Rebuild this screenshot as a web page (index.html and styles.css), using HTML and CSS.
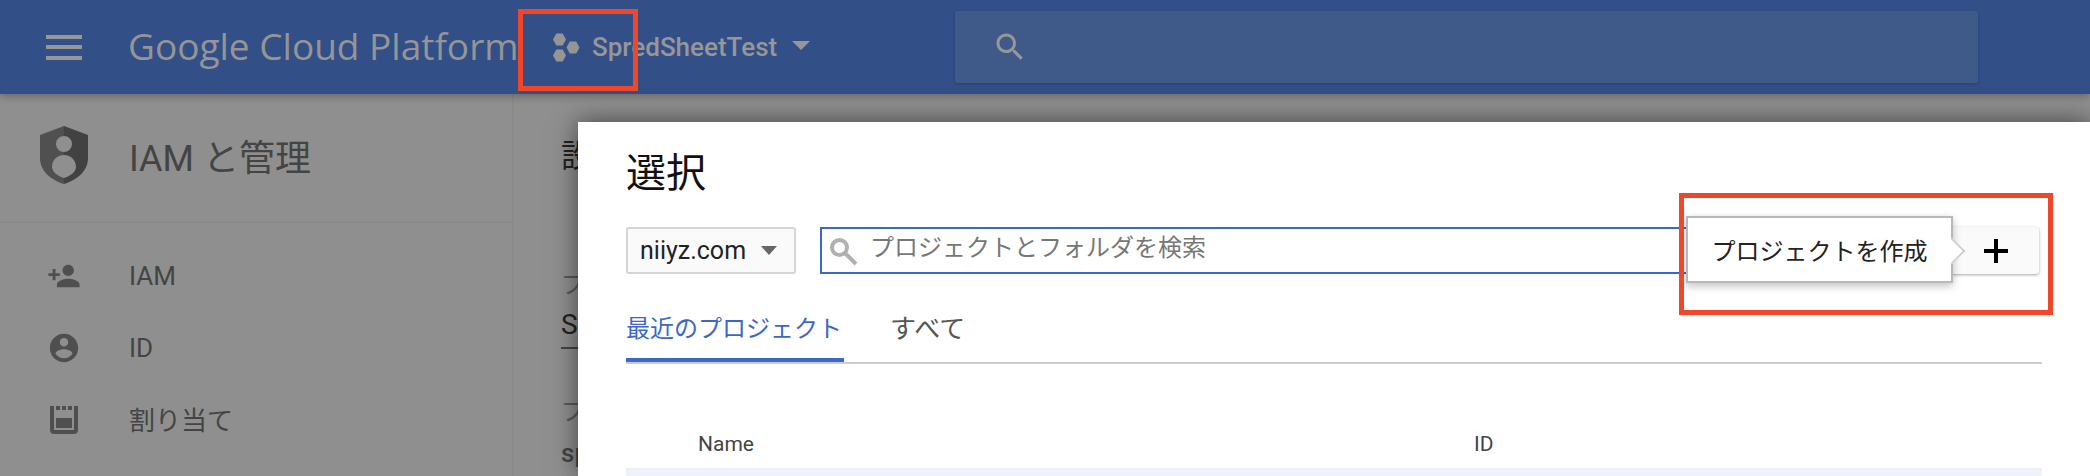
FILE: index.html
```html
<!DOCTYPE html>
<html lang="ja">
<head>
    <meta charset="UTF-8">
    <title>IAM と管理 - Google Cloud Platform</title>
    <link rel="stylesheet" href="styles.css">
</head>
<body>
<header class="topbar">
    <div class="menu-icon"><span></span><span></span><span></span></div>
    <div class="brand">Google Cloud Platform</div>
    <div class="project">
        <svg class="project-icon" viewBox="0 0 27 29">
            <polygon points="0,6.500 3.300,0.500 9.700,0.500 13,6.500 9.700,12.500 3.300,12.500"/>
            <polygon points="13.500,14.500 16.800,8.500 23.200,8.500 26.500,14.500 23.200,20.500 16.800,20.500"/>
            <polygon points="0,22.500 3.300,16.500 9.700,16.500 13,22.500 9.700,28.500 3.300,28.500"/>
        </svg>
        <span class="project-name">SpredSheetTest</span>
        <span class="caret caret-top"></span>
    </div>
    <div class="top-search">
        <svg class="top-search-icon" viewBox="0 0 24 24"><path d="M15.5 14h-.79l-.28-.27C15.41 12.59 16 11.11 16 9.5 16 5.91 13.09 3 9.500 3S3 5.910 3 9.500 5.910 16 9.500 16c1.610 0 3.090-.59 4.230-1.570l.27.28v.79l5 4.990L20.490 19l-4.990-5zm-6 0C7.010 14 5 11.990 5 9.500S7.010 5 9.500 5 14 7.010 14 9.500 11.990 14 9.500 14z"/></svg>
    </div>
</header>

<div class="main">
    <aside class="sidebar">
        <div class="side-head">
            <svg class="shield" viewBox="0 0 48 58">
                <path class="shield-left" fill-rule="evenodd" d="M24 0L0 9V32C0 45 11 54 24 58V52C18 50 12 46 12 41C12 34 17 29 24 29V26a8 8 0 0 1 0-16Z"/>
                <path class="shield-right" fill-rule="evenodd" d="M24 0L48 9V32C48 45 37 54 24 58V52C30 50 36 46 36 41C36 34 31 29 24 29V26a8 8 0 0 0 0-16Z"/>
            </svg>
            <span class="side-title">IAM と管理</span>
        </div>
        <nav class="side-nav">
            <div class="nav-item">
                <svg class="nav-icon" viewBox="0 0 24 24"><path d="M15 12c2.210 0 4-1.790 4-4s-1.790-4-4-4-4 1.790-4 4 1.790 4 4 4zm-9-2V7H4v3H1v2h3v3h2v-3h3v-2H6zm9 4c-2.670 0-8 1.340-8 4v2h16v-2c0-2.660-5.330-4-8-4z"/></svg>
                <span>IAM</span>
            </div>
            <div class="nav-item">
                <svg class="nav-icon" viewBox="0 0 24 24"><path d="M12 2C6.480 2 2 6.480 2 12s4.480 10 10 10 10-4.480 10-10S17.520 2 12 2zm0 3c1.660 0 3 1.340 3 3s-1.340 3-3 3-3-1.340-3-3 1.340-3 3-3zm0 14.200c-2.500 0-4.710-1.280-6-3.220.03-1.990 4-3.080 6-3.080 1.990 0 5.970 1.090 6 3.080-1.290 1.940-3.500 3.220-6 3.220z"/></svg>
                <span>ID</span>
            </div>
            <div class="nav-item">
                <svg class="nav-icon" viewBox="-3 -3 34 34">
                    <path d="M0 0h4V24h20V0h4V24a4 4 0 0 1-4 4H4a4 4 0 0 1-4-4Z"/>
                    <rect x="6" y="0" width="4" height="4"/>
                    <rect x="12" y="0" width="4" height="4"/>
                    <rect x="18" y="0" width="4" height="4"/>
                    <rect x="6" y="12" width="16" height="10"/>
                </svg>
                <span class="nav-label-ja">割り当て</span>
            </div>
        </nav>
    </aside>
    <section class="behind">
        <div class="behind-title">設定</div>
        <div class="behind-label">プロジェクト名</div>
        <div class="behind-value">SpredSheetTest</div>
        <div class="behind-label behind-label-2">プロジェクト ID</div>
        <div class="behind-id">spredsheettest</div>
    </section>
</div>

<div class="dialog">
    <h1 class="dialog-title">選択</h1>
    <div class="toolbar">
        <div class="org-select">
            <span>niiyz.com</span>
            <span class="caret caret-org"></span>
        </div>
        <div class="search-box">
            <svg class="search-icon" viewBox="0 0 28 30">
                <circle cx="9.500" cy="11.500" r="7.500"/>
                <line x1="15" y1="17" x2="26" y2="28"/>
            </svg>
            <span class="search-text">プロジェクトとフォルダを検索</span>
        </div>
        <button class="add-btn">
            <svg class="plus" viewBox="0 0 24 24"><path d="M10 0h4v10h10v4H14v10h-4V14H0v-4h10z"/></svg>
        </button>
    </div>
    <div class="tabs">
        <div class="tab tab-active">最近のプロジェクト</div>
        <div class="tab tab-all">すべて</div>
    </div>
    <div class="table-head">
        <div class="col-name">Name</div>
        <div class="col-id">ID</div>
    </div>
    <div class="table-row"></div>
</div>

<div class="tooltip">プロジェクトを作成</div>
<div class="callout callout-project"></div>
<div class="callout callout-create"></div>
</body>
</html>
```

FILE: styles.css
```css
* {
    margin: 0;
    padding: 0;
    box-sizing: border-box;
}

html, body {
    width: 100%;
    height: 100%;
    overflow: hidden;
}

body {
    font-family: Roboto, "Noto Sans CJK JP", sans-serif;
    background: #8f8f8f;
    color: #444;
    display: flex;
    flex-direction: column;
    position: relative;
}

/* top bar */
.topbar {
    height: 94px;
    flex-shrink: 0;
    background: #324f87;
    display: flex;
    align-items: center;
    padding-left: 46px;
    position: relative;
    box-shadow: 0 2px 8px rgba(0,0,0,0.3);
    z-index: 1;
}

.menu-icon {
    width: 36px;
    height: 25px;
    display: flex;
    flex-direction: column;
    justify-content: space-between;
    margin-right: 46px;
}

.menu-icon span {
    height: 4px;
    background: #979797;
}

.brand {
    width: 425px;
    font-family: "Open Sans", sans-serif;
    font-size: 37px;
    color: #959595;
    white-space: nowrap;
    margin-bottom: 4px;
}

.project {
    width: 402px;
    display: flex;
    align-items: center;
}

.project-icon {
    width: 27px;
    height: 29px;
    fill: #959595;
    margin-right: 12px;
}

.project-name {
    font-size: 26px;
    font-weight: 500;
    color: #979797;
}

.caret {
    width: 0;
    height: 0;
    border-left: 9px solid transparent;
    border-right: 9px solid transparent;
    border-top: 9px solid #979797;
}

.caret-top {
    margin-left: 15px;
    margin-bottom: 3px;
}

.top-search {
    width: 1023px;
    height: 72px;
    background: #3f5988;
    border-radius: 3px;
    box-shadow: 0 1px 3px rgba(0,0,0,0.2);
    display: flex;
    align-items: center;
    padding-left: 37px;
}

.top-search-icon {
    width: 36px;
    height: 36px;
    fill: #979797;
}

/* page behind the dialog */
.main {
    flex: 1;
    min-height: 0;
    display: flex;
    overflow: hidden;
}

.sidebar {
    width: 514px;
    border-right: 2px solid #898989;
}

.side-head {
    height: 129px;
    border-bottom: 2px solid #898989;
    display: flex;
    align-items: center;
    padding: 0 0 6px 40px;
}

.shield {
    width: 48px;
    height: 58px;
    margin-right: 41px;
}

.shield-left {
    fill: #505050;
}

.shield-right {
    fill: #424242;
}

.side-title {
    font-size: 36px;
    color: #444;
}

.side-nav {
    padding-top: 17px;
}

.nav-item {
    height: 72px;
    display: flex;
    align-items: center;
    padding-left: 47px;
    font-size: 26px;
    color: #444;
}

.nav-icon {
    width: 34px;
    height: 34px;
    fill: #4f4f4f;
    margin-right: 48px;
}

.nav-label-ja {
    margin-bottom: 4px;
}

.behind {
    flex: 1;
    padding: 46px 0 0 47px;
    overflow: hidden;
    white-space: nowrap;
}

.behind-title {
    font-size: 32px;
    line-height: 32px;
    color: #222;
    margin-bottom: 95px;
}

.behind-label {
    font-size: 24px;
    color: #5a5a5a;
    line-height: 36px;
}

.behind-value {
    font-size: 28px;
    color: #222;
    width: 200px;
    height: 46px;
    line-height: 44px;
    border-bottom: 2px solid #444;
}

.behind-label-2 {
    margin-top: 45px;
}

.behind-id {
    font-size: 26px;
    font-weight: 500;
    line-height: 30px;
    color: #444;
    margin-top: 8px;
}

/* project picker */
.dialog {
    position: absolute;
    left: 578px;
    top: 122px;
    right: 0;
    bottom: 0;
    background: #fff;
    padding: 0 48px;
    box-shadow: 0 0 24px rgba(0,0,0,0.55);
    overflow: hidden;
    z-index: 2;
}

.dialog-title {
    font-size: 40px;
    font-weight: 400;
    color: #111;
    line-height: 58px;
    padding-top: 23px;
    height: 105px;
}

.toolbar {
    display: flex;
    height: 47px;
}

.org-select {
    width: 170px;
    border: 2px solid #d4d4d4;
    border-radius: 3px;
    background: #fafafa;
    display: flex;
    align-items: center;
    justify-content: space-between;
    padding: 0 17px 0 12px;
    font-size: 25px;
    color: #222;
}

.caret-org {
    border-left-width: 8px;
    border-right-width: 8px;
    border-top: 9px solid #666;
}

.search-box {
    flex: 1;
    margin-left: 24px;
    border: 2px solid #3b67c9;
    display: flex;
    align-items: center;
    padding-left: 8px;
    font-size: 24px;
    color: #777;
}

.search-icon {
    width: 28px;
    height: 30px;
    fill: none;
    stroke: #b0b0b0;
    stroke-width: 4;
    margin-right: 12px;
}

.search-text {
    margin-bottom: 10px;
}

.add-btn {
    width: 89px;
    margin-right: 3px;
    border: none;
    border-radius: 3px;
    background: #fafafa;
    box-shadow: 0 1px 3px rgba(0,0,0,0.35);
    display: flex;
    align-items: center;
    justify-content: flex-end;
    padding-right: 31px;
}

.plus {
    width: 24px;
    height: 24px;
    fill: #000;
}

.tabs {
    display: flex;
    height: 68px;
    margin-top: 22px;
    border-bottom: 2px solid #ccc;
}

.tab {
    font-size: 24px;
    line-height: 32px;
    padding-top: 17px;
    color: #555;
}

.tab-active {
    width: 218px;
    margin-right: 46px;
    color: #3b67c9;
    border-bottom: 4px solid #3b67c9;
    height: 66px;
}

.tab-all {
    font-size: 26px;
}

.table-head {
    display: flex;
    align-items: center;
    height: 106px;
    padding: 56px 0 0 72px;
    border-bottom: 2px solid #eee;
    font-size: 21px;
    color: #444;
}

.col-name {
    width: 776px;
}

.table-row {
    height: 6px;
    background: #eef3fb;
}

/* overlays: tooltip and annotation boxes */
.tooltip {
    position: absolute;
    left: 1686px;
    top: 216px;
    width: 267px;
    height: 67px;
    background: #fff;
    border: 2px solid #b8b8b8;
    box-shadow: 0 3px 8px rgba(0,0,0,0.25);
    font-size: 24px;
    color: #222;
    display: flex;
    align-items: center;
    justify-content: center;
    z-index: 3;
}

.tooltip::after {
    content: '';
    position: absolute;
    right: -12px;
    top: 22px;
    width: 20px;
    height: 20px;
    background: #fff;
    border-top: 2px solid #ccc;
    border-right: 2px solid #ccc;
    transform: rotate(45deg) scale(0.85);
}

.callout {
    position: absolute;
    border: 5px solid #f0462a;
    z-index: 4;
}

.callout-project {
    left: 518px;
    top: 9px;
    width: 120px;
    height: 82px;
}

.callout-create {
    left: 1679px;
    top: 193px;
    width: 374px;
    height: 122px;
}
```
